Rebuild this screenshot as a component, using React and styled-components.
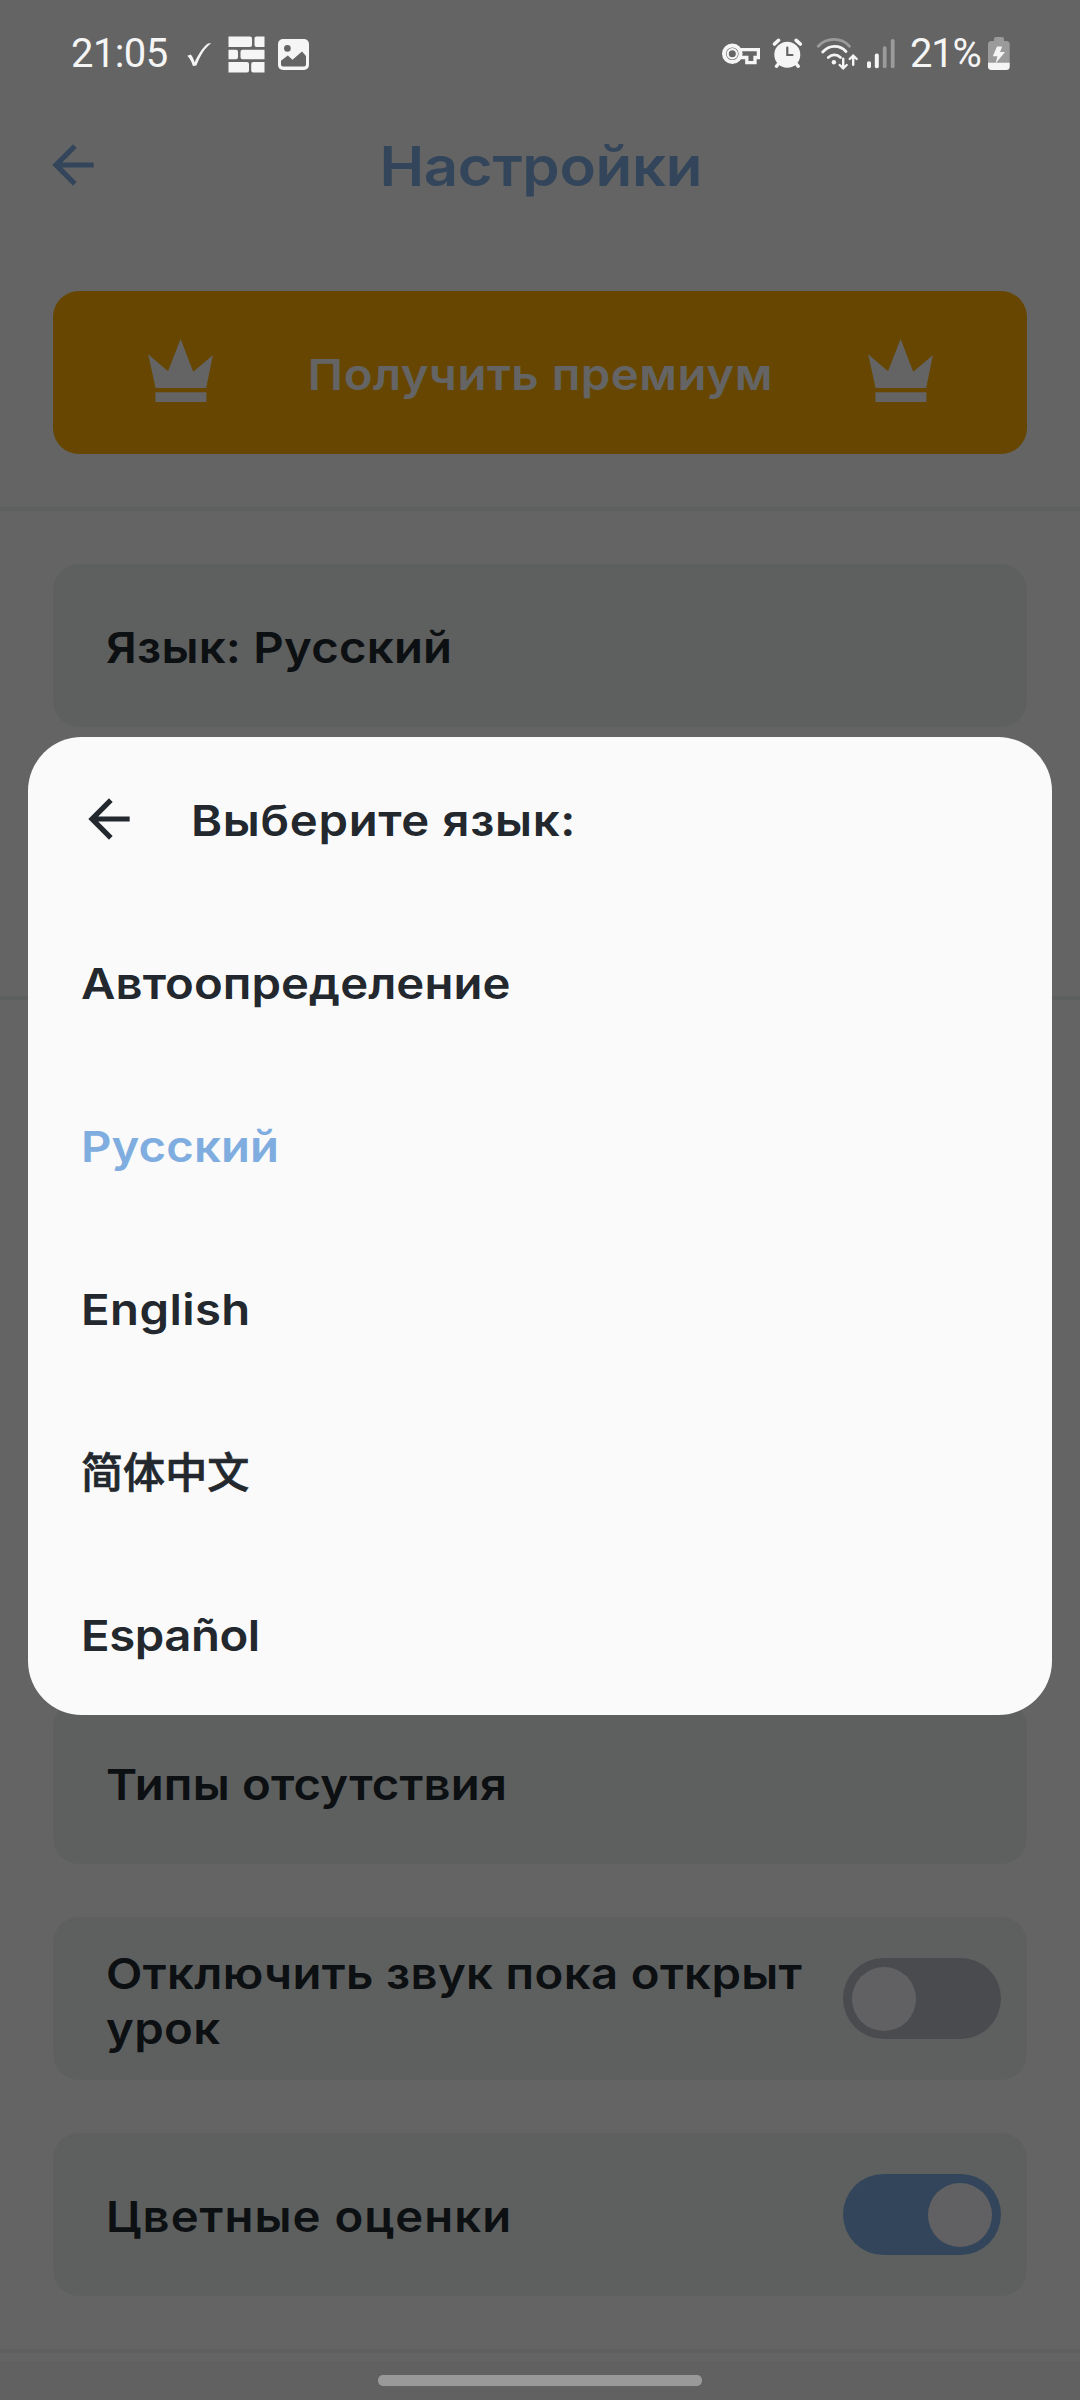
import React from "react";
import styled, { createGlobalStyle } from "styled-components";

const colors = {
  page: "#fafafa",
  card: "#ebefee",
  ink: "#22282d",
  accent: "#80ade0",
  premium: "#ffaf00",
  off: "#b9bbc6",
  knob: "#f2f0f4",
  status: "#f5f5f5",
  statusDim: "#9b9b9b",
};

const GlobalStyle = createGlobalStyle`
  *, *::before, *::after { box-sizing: border-box; }
  body {
    margin: 0;
    background: #646464;
    font-family: Inter, "Noto Sans CJK SC", sans-serif;
  }
`;

const Screen = styled.div`
  position: relative;
  width: 1080px;
  height: 2400px;
  overflow: hidden;
  background: ${colors.page};
`;

const Header = styled.header`
  display: grid;
  grid-template-columns: 1fr auto 1fr;
  align-items: center;
  height: 228px;
  padding: 104px 42px 0 42px;
`;

const HeaderBack = styled.span`
  display: flex;
  padding-bottom: 3px;
`;

const Title = styled.h1`
  margin: 0;
  padding-left: 1px;
  font-size: 54.5px;
  font-weight: 600;
  line-height: 66px;
  letter-spacing: -0.3px;
  color: ${colors.accent};
  transform: scaleX(1.1);
`;

const Label = styled.span`
  padding-top: 4px;
  font-size: 43px;
  font-weight: 600;
  line-height: 55px;
  letter-spacing: ${(p) => p.$spacing ?? 0.3}px;
  color: ${(p) => p.$color ?? colors.ink};
  white-space: pre;
  transform: scaleX(1.1);
  transform-origin: ${(p) => (p.$centered ? "center" : "left center")};

  &:lang(zh) {
    font-size: 42px;
    font-weight: 500;
    -webkit-text-stroke: 0.7px currentColor;
    transform: none;
  }
`;

const Section = styled.section`
  display: flex;
  flex-direction: column;
  gap: 53px;
  padding: ${(p) => (p.$first ? "63px" : "53px")} 53px 53px;
  border-bottom: 4px solid ${colors.card};
`;

const PremiumButton = styled.div`
  display: flex;
  align-items: center;
  justify-content: space-between;
  height: 163px;
  padding: 0 94px 0 95px;
  border-radius: 26px;
  background: ${colors.premium};
`;

const Card = styled.div`
  display: flex;
  align-items: center;
  justify-content: space-between;
  height: 163px;
  padding: 0 26px 0 53px;
  border-radius: 26px;
  background: ${colors.card};
`;

const Track = styled.span`
  display: flex;
  align-items: center;
  justify-content: ${(p) => (p.$on ? "flex-end" : "flex-start")};
  flex: none;
  width: 158px;
  height: 81px;
  padding: 0 9px;
  border-radius: 41px;
  background: ${(p) => (p.$on ? colors.accent : colors.off)};
`;

const Knob = styled.span`
  width: 64px;
  height: 64px;
  border-radius: 50%;
  background: ${colors.knob};
`;

const Scrim = styled.div`
  position: absolute;
  inset: 0;
  padding: 737px 28px 0;
  background: rgba(0, 0, 0, 0.6);
`;

const Dialog = styled.div`
  height: 978px;
  border-radius: 54px;
  background: ${colors.page};
`;

const DialogHeader = styled.div`
  display: flex;
  align-items: center;
  gap: 51px;
  height: 163px;
  padding-left: 50px;
`;

const Option = styled.div`
  display: flex;
  align-items: center;
  height: 163px;
  padding-left: 53px;
`;

const StatusBar = styled.div`
  position: absolute;
  top: 35px;
  left: 0;
  width: 1080px;
  display: flex;
  justify-content: space-between;
  height: 40px;
  padding: 0 70px 0 71px;
`;

const StatusGroup = styled.div`
  display: flex;
  align-items: center;
  gap: ${(p) => p.$gap}px;
`;

const StatusText = styled.span`
  width: ${(p) => p.$width}px;
  padding-bottom: 3px;
  font-family: Roboto, sans-serif;
  font-size: 40px;
  line-height: 40px;
  letter-spacing: ${(p) => p.$spacing}px;
  white-space: nowrap;
  color: ${colors.status};
`;

const NavBar = styled.div`
  position: absolute;
  left: 0;
  bottom: 0;
  width: 1080px;
  height: 39px;
  display: flex;
  justify-content: center;
  padding-top: 14px;
  background: #616161;
`;

const NavHandle = styled.span`
  width: 324px;
  height: 11px;
  border-radius: 5px;
  background: #999999;
`;

const Back = ({ color }) => (
  <svg width="62" height="62" viewBox="0 0 24 24" fill={color}>
    <path d="M20 11H7.83l5.59-5.59L12 4l-8 8 8 8 1.41-1.41L7.83 13H20v-2z" />
  </svg>
);

const CrownShape = styled.svg`
  display: block;
  margin-bottom: 4px;
  flex: none;
`;

const Crown = () => (
  <CrownShape width="65" height="63" viewBox="0 0 65 63" fill={colors.page}>
    <path d="M0.2 15.3 20 32.3 32.6 0 45.2 32.8 64.8 16.2 58.2 49H7.6z" />
    <path d="M7.4 53.2h51V63h-51z" />
  </CrownShape>
);

const CheckIcon = () => (
  <svg width="25" height="40" viewBox="0 0 25 40" fill={colors.status}>
    <path d="M0.3 20.8 3.8 19.4C5.8 21.8 6.8 24.3 7.6 27.2 11.5 18.8 16.5 11.2 21 8.4L24.2 7.9C17.5 13.4 13.3 20.2 9.4 30.6L5.9 31C4.6 27 3.2 23.7 0.3 20.8z" />
  </svg>
);

const BricksIcon = () => (
  <svg width="37" height="40" viewBox="0 0 37 40" fill={colors.status}>
    <path d="M.5 1.5H22a2 2 0 0 1 2 2V10a2 2 0 0 1-2 2H.5zM28.500 1.500H36.500V12H28.500a2 2 0 0 1-2-2V3.500a2 2 0 0 1 2-2zM.5 14.700H8a2 2 0 0 1 2 2v5.500a2 2 0 0 1-2 2H.5zM14.500 14.700h22v9.500h-22a2 2 0 0 1-2-2v-5.500a2 2 0 0 1 2-2zM.5 27H19a2 2 0 0 1 2 2v6.500a2 2 0 0 1-2 2H.5zM25.200 27h11.300v10.500H25.200a2 2 0 0 1-2-2V29a2 2 0 0 1 2-2z" />
  </svg>
);

const PictureIcon = () => (
  <svg width="31" height="40" viewBox="0 0 31 40">
    <rect y="4" width="31" height="31" rx="5" fill={colors.status} />
    <circle cx="9.400" cy="13.400" r="3.300" fill="#646464" />
    <path d="M3 25.800 9.800 20.400 14.500 24.700 24 16.500 28 21v8.500a2 2 0 0 1-2 2H5a2 2 0 0 1-2-2z" fill="#646464" />
  </svg>
);

const KeyIcon = () => (
  <svg width="38" height="40" viewBox="0 0 38 40" fill="none" stroke={colors.status}>
    <circle cx="10.300" cy="18.700" r="8.300" strokeWidth="4" />
    <circle cx="10.300" cy="18.700" r="4.600" strokeWidth="2.200" />
    <path d="M18.500 14.600H36.400V22.500H33V27.700H24.800V22.500H18.500" strokeWidth="3.300" />
  </svg>
);

const AlarmIcon = () => (
  <svg width="31" height="40" viewBox="0 0 31 40" fill="none" strokeLinecap="round">
    <circle cx="15.300" cy="19.700" r="13" fill={colors.status} />
    <path d="M2.500 9 6.500 5.300M24.200 5.300 28.300 9" stroke={colors.status} strokeWidth="3.600" />
    <path d="M6.300 29 4.400 31.300M24.400 29 26.300 31.300" stroke={colors.status} strokeWidth="3.400" />
    <path d="M15.300 12.500V20H20.500" stroke="#646464" strokeWidth="2.200" />
  </svg>
);

const WifiIcon = () => (
  <svg width="44" height="40" viewBox="0 0 44 40" fill="none" stroke={colors.status} strokeWidth="2.800" strokeLinecap="round">
    <path d="M3.200 11.200C12 2.200 26 2.200 34.500 11.200" stroke={colors.statusDim} />
    <path d="M7.700 17C14.500 9.700 24.500 9.700 31 16.500" />
    <path d="M13.300 22.500C17 19 22 19 25.500 22.500" />
    <circle cx="18.900" cy="27.200" r="2.200" fill={colors.status} stroke="none" />
    <path d="M28.200 23.800V33M24.700 30 28.200 33.300 31.700 30M38.200 29.800V21M34.700 24 38.200 20.600 41.700 24" strokeWidth="2.400" />
  </svg>
);

const SignalIcon = () => (
  <svg width="28" height="40" viewBox="0 0 28 40">
    <rect x="0" y="26.300" width="4" height="7" rx="1.800" fill={colors.status} />
    <rect x="7.800" y="18.600" width="4" height="14.700" rx="1.800" fill={colors.status} />
    <rect x="15.800" y="11.300" width="3.800" height="22" rx="1.800" fill={colors.statusDim} />
    <rect x="23.800" y="4" width="3.800" height="29.300" rx="1.800" fill={colors.statusDim} />
  </svg>
);

const BatteryIcon = () => (
  <svg width="22" height="40" viewBox="0 0 22 40">
    <path d="M6 6V4a2 2 0 0 1 2-2h6a2 2 0 0 1 2 2v2h2.500A3.200 3.200 0 0 1 21.700 9.500V28H0V9.500A3.200 3.200 0 0 1 3.500 6z" fill={colors.statusDim} />
    <path d="M0 27.800H21.700V31.500A3.500 3.500 0 0 1 18.200 35H3.500A3.500 3.500 0 0 1 0 31.500z" fill={colors.status} />
    <path d="M9 11.500H14.200L12 17H17L7.600 28.500 9.400 21.300H4.800z" fill={colors.status} />
  </svg>
);

const languages = [
  { name: "Автоопределение", lang: "ru", spacing: 0.06 },
  { name: "Русский", lang: "ru", spacing: 0.07, color: colors.accent },
  { name: "English", lang: "en", spacing: 0.37 },
  { name: "简体中文", lang: "zh", spacing: 0.1 },
  { name: "Español", lang: "es", spacing: -0.4 },
];

const Toggle = ({ on }) => (
  <Track $on={on}>
    <Knob />
  </Track>
);

export default function App() {
  return (
    <>
      <GlobalStyle />
      <Screen>
        <Header>
          <HeaderBack>
            <Back color={colors.accent} />
          </HeaderBack>
          <Title>Настройки</Title>
        </Header>
        <Section $first>
          <PremiumButton>
            <Crown />
            <Label $centered $spacing={0.48} $color={colors.page}>Получить премиум</Label>
            <Crown />
          </PremiumButton>
        </Section>
        <Section>
          <Card>
            <Label $spacing={0.2}>Язык: Русский</Label>
          </Card>
          <Card />
        </Section>
        <Section>
          <Card />
          <Card />
          <Card />
          <Card>
            <Label $spacing={0.16}>Типы отсутствия</Label>
          </Card>
          <Card>
            <Label $spacing={0.31}>{"Отключить звук пока открыт\nурок"}</Label>
            <Toggle />
          </Card>
          <Card>
            <Label $spacing={0.91}>Цветные оценки</Label>
            <Toggle on />
          </Card>
        </Section>

        <Scrim>
          <Dialog>
            <DialogHeader>
              <Back color={colors.ink} />
              <Label $spacing={0.61}>Выберите язык:</Label>
            </DialogHeader>
            {languages.map((l) => (
              <Option key={l.name}>
                <Label lang={l.lang} $spacing={l.spacing} $color={l.color}>{l.name}</Label>
              </Option>
            ))}
          </Dialog>
        </Scrim>

        <StatusBar>
          <StatusGroup $gap={0}>
            <StatusText $width={116} $spacing={-0.6}>21:05</StatusText>
            <StatusGroup $gap={16}>
              <CheckIcon />
              <StatusGroup $gap={13}>
                <BricksIcon />
                <PictureIcon />
              </StatusGroup>
            </StatusGroup>
          </StatusGroup>
          <StatusGroup $gap={0}>
            <StatusGroup $gap={12}>
              <KeyIcon />
              <AlarmIcon />
              <StatusGroup $gap={8}>
                <WifiIcon />
                <StatusGroup $gap={15}>
                  <SignalIcon />
                  <StatusText $width={78} $spacing={-1.2}>21%</StatusText>
                </StatusGroup>
              </StatusGroup>
            </StatusGroup>
            <BatteryIcon />
          </StatusGroup>
        </StatusBar>
        <NavBar>
          <NavHandle />
        </NavBar>
      </Screen>
    </>
  );
}
